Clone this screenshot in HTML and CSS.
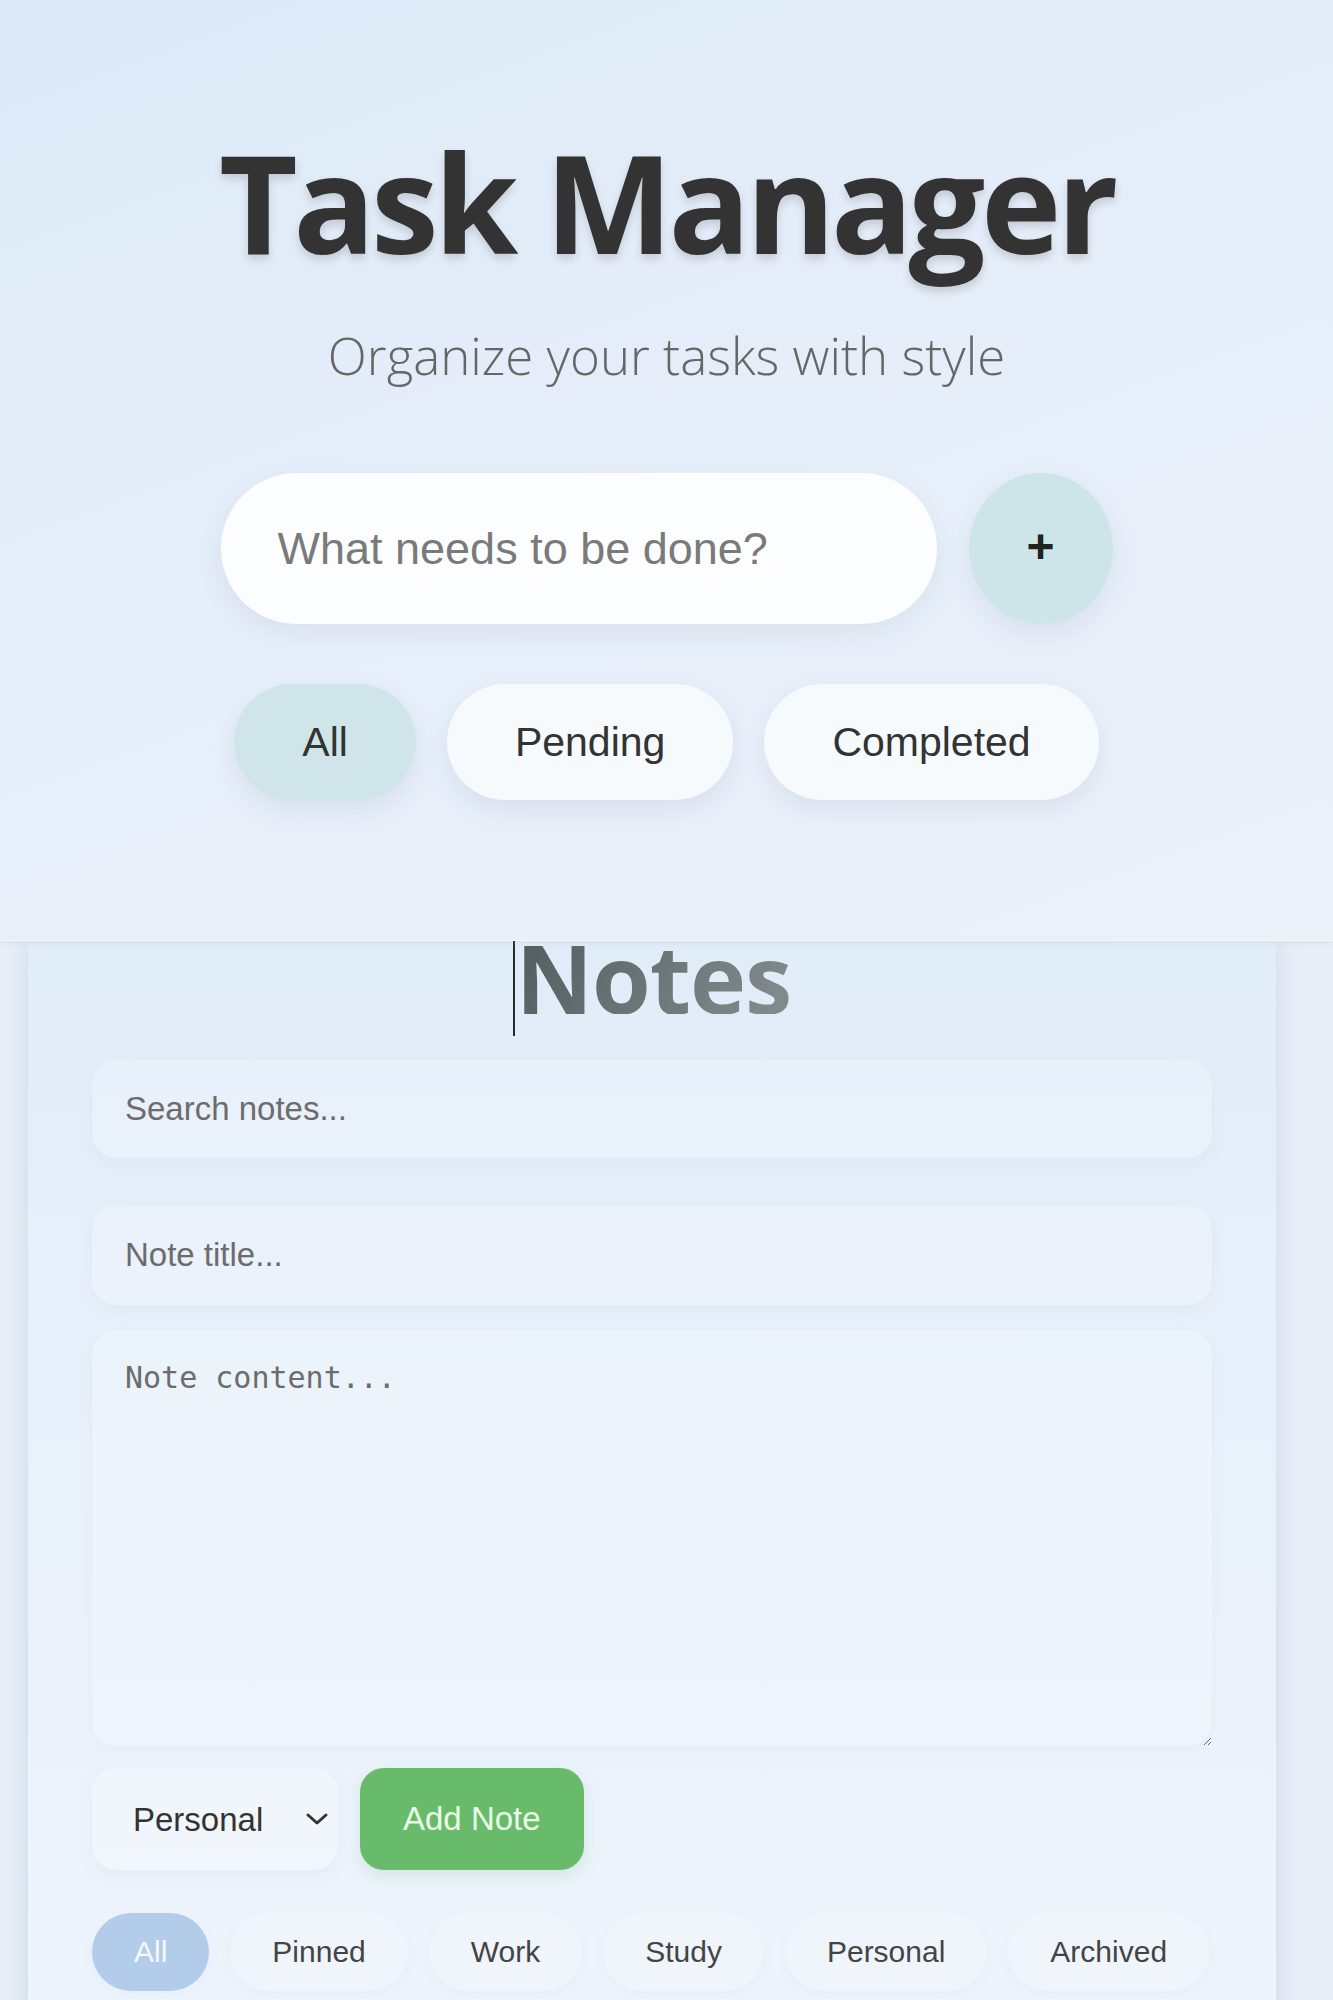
FILE: index.html
```html
<!DOCTYPE html>
<html lang="en">
<head>
<meta charset="utf-8">
<title>Task Manager</title>
<link rel="stylesheet" href="styles.css">
</head>
<body>
<header class="tasks">
  <h1 class="app-title">Task Manager</h1>
  <p class="app-subtitle">Organize your tasks with style</p>
  <div class="add-row">
    <input class="task-input" type="text" placeholder="What needs to be done?">
    <button class="add-btn" type="button">+</button>
  </div>
  <div class="filters">
    <button class="filter filter-active" type="button">All</button>
    <button class="filter" type="button">Pending</button>
    <button class="filter" type="button">Completed</button>
  </div>
</header>
<main class="notes">
  <h2 class="notes-title"><span class="caret"></span><span class="notes-text">Notes</span></h2>
  <input class="field search-field" type="text" placeholder="Search notes...">
  <input class="field title-field" type="text" placeholder="Note title...">
  <textarea class="field content-field" placeholder="Note content..."></textarea>
  <div class="note-actions">
    <div class="select-wrap">
      <select class="category-select">
        <option>Personal</option>
        <option>Work</option>
        <option>Study</option>
      </select>
      <svg class="chevron" width="24" height="14" viewBox="0 0 24 14"><polyline points="3,3 12,11 21,3" fill="none" stroke="#333" stroke-width="3" stroke-linecap="round" stroke-linejoin="round"/></svg>
    </div>
    <button class="add-note" type="button">Add Note</button>
  </div>
  <div class="categories">
    <button class="cat cat-active" type="button">All</button>
    <button class="cat" type="button">Pinned</button>
    <button class="cat" type="button">Work</button>
    <button class="cat" type="button">Study</button>
    <button class="cat" type="button">Personal</button>
    <button class="cat" type="button">Archived</button>
  </div>
</main>
</body>
</html>
```
FILE: styles.css
```css
* { box-sizing: border-box; }

html, body {
  margin: 0;
  padding: 0;
}

body {
  background: #e7eef7;
  font-family: "Liberation Sans", Arial, sans-serif;
  min-height: 2000px;
  overflow: hidden;
}

.tasks {
  position: relative;
  z-index: 2;
  height: 941px;
  padding-top: 134px;
  background: linear-gradient(160deg, #deeaf8 0%, #e6eef9 55%, #ebf1f9 100%);
  border-bottom: 1px solid rgba(255, 255, 255, 0.7);
  box-shadow: 0 2px 6px rgba(160, 180, 205, 0.18);
  display: flex;
  flex-direction: column;
  align-items: center;
}

.app-title {
  margin: 0;
  font-family: "Open Sans", "Noto Sans", sans-serif;
  font-weight: 700;
  font-size: 136px;
  line-height: 136px;
  letter-spacing: -4.5px;
  color: #333;
  text-shadow: 0 5px 8px rgba(0, 0, 0, 0.14);
}

.app-subtitle {
  margin: 55px 0 0;
  font-family: "Open Sans", "Noto Sans", sans-serif;
  font-weight: 300;
  font-size: 51px;
  line-height: 60px;
  color: #666;
}

.add-row {
  margin-top: 88px;
  display: flex;
  gap: 32px;
  align-items: center;
}

.task-input {
  width: 716px;
  height: 151px;
  border: none;
  border-radius: 76px;
  padding: 0 57px;
  background: #fcfdfe;
  font-family: "Liberation Sans", Arial, sans-serif;
  font-size: 45px;
  color: #333;
  box-shadow: 0 10px 24px rgba(120, 145, 175, 0.12);
  outline: none;
}

.task-input::placeholder { color: #7a7a7a; }

.add-btn {
  width: 144px;
  height: 151px;
  border: none;
  border-radius: 50%;
  background: #cde5e9;
  color: #222;
  font-family: "Liberation Sans", Arial, sans-serif;
  font-weight: 700;
  font-size: 48px;
  line-height: 1;
  padding: 0 0 4px 0;
  box-shadow: 0 10px 24px rgba(120, 145, 175, 0.14);
}

.filters {
  margin-top: 60px;
  display: flex;
  gap: 31px;
}

.filter {
  height: 116px;
  padding: 0 68px;
  border: none;
  border-radius: 58px;
  background: #f7fafd;
  color: #333;
  font-family: "Liberation Sans", Arial, sans-serif;
  font-size: 41px;
  box-shadow: 0 10px 22px rgba(120, 145, 175, 0.14);
}

.filter-active {
  background: #cfe5e9;
}

.notes {
  position: relative;
  z-index: 1;
  margin-left: 28px;
  width: 1248px;
  min-height: 1059px;
  padding: 0 64px 40px;
  background: linear-gradient(180deg, #e1ecf9 0%, #e9f1fb 50%, #eef4fc 100%);
  box-shadow: 0 0 22px rgba(100, 130, 170, 0.2);
}

.notes-title {
  margin: 0;
  height: 95px;
  display: flex;
  justify-content: center;
  align-items: flex-start;
  font-family: "Open Sans", "Noto Sans", sans-serif;
  font-weight: 700;
  font-size: 95px;
  line-height: 73px;
}

.caret {
  width: 2px;
  height: 95px;
  background: #2a2a2a;
  margin-right: 1px;
}

.notes-text {
  background: linear-gradient(120deg, #535c5e 0%, #6e787a 55%, #838d8f 100%);
  -webkit-background-clip: text;
  background-clip: text;
  color: transparent;
  letter-spacing: -1px;
}

.field {
  display: block;
  width: 100%;
  border: none;
  outline: none;
  border-radius: 24px;
  background: rgba(255, 255, 255, 0.2);
  box-shadow: 0 6px 16px rgba(120, 145, 175, 0.06);
  font-family: "Liberation Sans", Arial, sans-serif;
  font-size: 33px;
  color: #333;
  padding: 0 33px;
}

.field::placeholder { color: #6c6c6c; }

.search-field {
  margin-top: 24px;
  height: 98px;
}

.title-field {
  margin-top: 47px;
  height: 100px;
}

.content-field {
  margin-top: 25px;
  height: 416px;
  padding: 30px 33px;
  font-family: "DejaVu Sans Mono", "Liberation Mono", monospace;
  font-size: 30px;
  line-height: 36px;
}

.note-actions {
  margin-top: 22px;
  display: flex;
  gap: 22px;
  align-items: center;
}

.select-wrap {
  position: relative;
  width: 246px;
  height: 102px;
}

.category-select {
  width: 100%;
  height: 100%;
  border: none;
  outline: none;
  border-radius: 24px;
  padding: 0 0 0 41px;
  -webkit-appearance: none;
  appearance: none;
  background: rgba(255, 255, 255, 0.28);
  box-shadow: 0 6px 16px rgba(120, 145, 175, 0.07);
  font-family: "Liberation Sans", Arial, sans-serif;
  font-size: 33px;
  color: #333;
}

.chevron {
  position: absolute;
  left: 213px;
  top: 44px;
  pointer-events: none;
}

.add-note {
  height: 102px;
  padding: 0 43px;
  border: none;
  border-radius: 24px;
  background: #67bb6b;
  color: #eafbe6;
  font-family: "Liberation Sans", Arial, sans-serif;
  font-size: 33px;
  box-shadow: 0 6px 16px rgba(80, 150, 90, 0.15);
}

.categories {
  margin-top: 43px;
  display: flex;
  gap: 21px;
}

.cat {
  height: 78px;
  padding: 0 42px;
  border: none;
  border-radius: 39px;
  background: rgba(255, 255, 255, 0.16);
  box-shadow: 0 4px 12px rgba(120, 145, 175, 0.05);
  font-family: "Liberation Sans", Arial, sans-serif;
  font-size: 30px;
  color: #444;
}

.cat-active {
  background: #b3cce9;
  color: #f4f8fd;
}
```
